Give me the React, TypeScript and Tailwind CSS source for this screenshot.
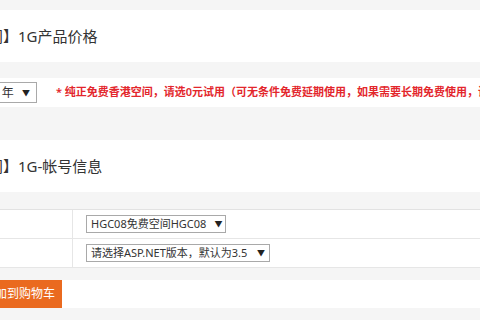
import React from 'react'

const font = { fontFamily: '"Noto Sans", "Noto Sans CJK SC", sans-serif' }

const FakeSelect = ({ label, className }: { label: string; className: string }) => (
    <div className={`flex items-center justify-between border border-[#a9a9a9] bg-white text-[#333] px-[4px] ${className}`}>
        <span className='whitespace-nowrap'>{label}</span>
        <span className='text-[8px] text-[#222] ml-2'>▼</span>
    </div>
)

const SectionTitle = ({ text }: { text: string }) => (
    <div className='h-[52px] bg-white flex items-center shrink-0'>
        <span className='ml-[-12px] text-[15px] text-[#333] whitespace-nowrap'>{text}</span>
    </div>
)

const rows = [
    { v: 'HGC08免费空间HGC08', w: 'w-[140px]' },
    { v: '请选择ASP.NET版本，默认为3.5', w: 'w-[184px]' },
]

export default function App() {
    return (
        <div style={font} className='w-[480px] h-[320px] overflow-hidden bg-[#f5f5f5] flex flex-col'>
            <div className='h-[10px] shrink-0' />
            <SectionTitle text='间】1G产品价格' />
            <div className='h-[16px] shrink-0' />

            <div className='h-[29px] bg-white flex items-center shrink-0'>
                <FakeSelect label='1年' className='ml-[-12px] w-[50px] h-[21px] pl-[6px] pr-[6px] text-[12px]' />
                <span className='ml-[19px] text-[11px] font-semibold text-[#e3262c] whitespace-nowrap'>
                    * 纯正免费香港空间，请选0元试用（可无条件免费延期使用，如果需要长期免费使用，请
                </span>
            </div>

            <div className='h-[33px] shrink-0' />
            <SectionTitle text='间】1G-帐号信息' />
            <div className='h-[17px] shrink-0' />

            <div className='border-t border-[#e2e2e2] bg-white shrink-0'>
                {rows.map((r, i) => (
                    <div key={i} className='h-[29px] flex border-b border-[#e6e6e6]'>
                        <div className='w-[73px] border-r border-[#e6e6e6]' />
                        <div className='flex items-center pl-[13px]'>
                            <FakeSelect label={r.v} className={`h-[18px] text-[11px] ${r.w}`} />
                        </div>
                    </div>
                ))}
            </div>

            <div className='h-[12px] shrink-0' />
            <div className='h-[28px] bg-white flex shrink-0'>
                <button className='ml-[-24px] w-[86px] h-[28px] bg-[#ea6a1f] text-white text-[12px] whitespace-nowrap'>
                    添加到购物车
                </button>
            </div>
        </div>
    )
}
